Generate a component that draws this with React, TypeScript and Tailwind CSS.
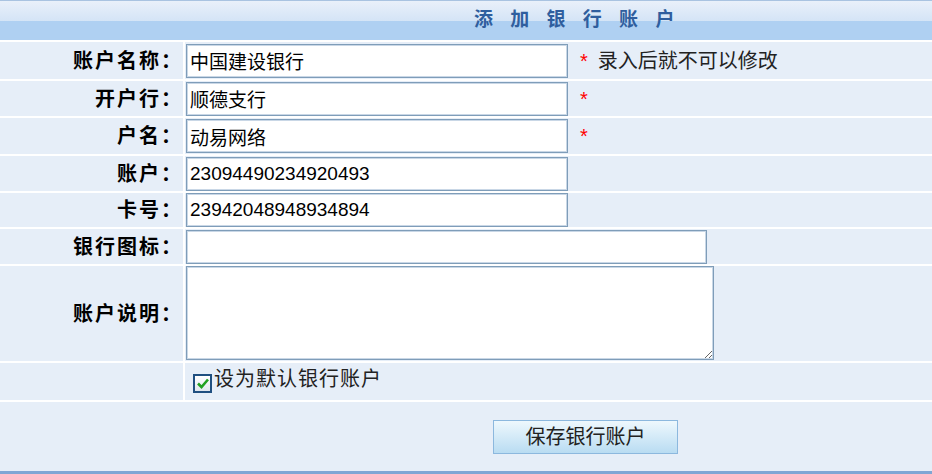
import { useState } from 'react';

const cjk = "font-['Liberation_Sans','Noto_Sans_CJK_SC',sans-serif]";

function Row({ h, label, children }: { h: string; label?: string; children?: React.ReactNode }) {
  return (
    <div className={`grid grid-cols-[183px_1fr] gap-x-[2px] ${h}`}>
      <div className="flex items-center justify-end bg-[#e6eef8] pr-[0px] text-[20px] font-bold tracking-[2px] text-black">
        {label}
      </div>
      <div className="flex items-center bg-[#e6eef8] pl-[1px]">{children}</div>
    </div>
  );
}

function Field({ value, w }: { value: string; w: string }) {
  return (
    <input
      defaultValue={value}
      className={`${w} h-[34px] border border-[#7f9db9] bg-white px-[3px] text-[19px] text-black shadow-[inset_0_0_0_1px_#c9d7e6] outline-none`}
    />
  );
}

function Star() {
  return <span className="ml-[12px] text-[20px] leading-none text-[#ff0000]">*</span>;
}

export default function App() {
  const [isDefault, setIsDefault] = useState(true);

  return (
    <div className={`${cjk} flex h-[474px] w-[932px] flex-col gap-y-[2px] bg-white`}>
      {/* 标题栏 */}
      <div className="flex h-[40px] items-center border-t border-[#a9c3e1] bg-[linear-gradient(to_bottom,#e9f0fa_0%,#d4e4f6_52%,#afd0f2_52%,#afd0f2_100%)] pl-[474px]">
        <span className="text-[19px] font-bold tracking-[6px] text-[#2f5e9e]">添 加 银 行 账 户</span>
      </div>

      <Row h="h-[37px]" label="账户名称：">
        <Field value="中国建设银行" w="w-[382px]" />
        <Star />
        <span className="ml-[10px] text-[20px] text-[#222]">录入后就不可以修改</span>
      </Row>
      <Row h="h-[35px]" label="开户行：">
        <Field value="顺德支行" w="w-[382px]" />
        <Star />
      </Row>
      <Row h="h-[36px]" label="户名：">
        <Field value="动易网络" w="w-[382px]" />
        <Star />
      </Row>
      <Row h="h-[35px]" label="账户：">
        <Field value="23094490234920493" w="w-[382px]" />
      </Row>
      <Row h="h-[34px]" label="卡号：">
        <Field value="23942048948934894" w="w-[382px]" />
      </Row>
      <Row h="h-[35px]" label="银行图标：">
        <Field value="" w="w-[521px]" />
      </Row>
      <Row h="h-[95px]" label="账户说明：">
        <textarea className="h-[94px] w-[528px] self-start border border-[#7f9db9] bg-white shadow-[inset_0_0_0_1px_#c9d7e6] outline-none" />
      </Row>
      <Row h="h-[37px]">
        <label className="ml-[7px] flex cursor-pointer items-center">
          <span
            onClick={() => setIsDefault(!isDefault)}
            className="mt-[4px] flex h-[19px] w-[19px] items-center justify-center border-2 border-[#1f4f80] bg-[linear-gradient(to_bottom,#ffffff,#dfe6ee)]"
          >
            {isDefault && (
              <svg width="12" height="11" viewBox="0 0 12 11">
                <path d="M1 5.5 L4.5 9 L11 1.5" fill="none" stroke="#21a121" strokeWidth="2.6" />
              </svg>
            )}
          </span>
          <span className="mb-[6px] ml-[2px] text-[20px] tracking-[1px] text-[#222]">设为默认银行账户</span>
        </label>
      </Row>

      {/* 提交 */}
      <div className="flex h-[72px] items-center border-b-[3px] border-[#7fa6d4] bg-[#e6eef8] pl-[493px]">
        <button className="mt-[1px] h-[34px] w-[185px] border border-[#8cb8de] bg-[linear-gradient(to_bottom,#eef8fd,#b9dcf2)] text-[20px] text-[#222]">
          保存银行账户
        </button>
      </div>
    </div>
  );
}
